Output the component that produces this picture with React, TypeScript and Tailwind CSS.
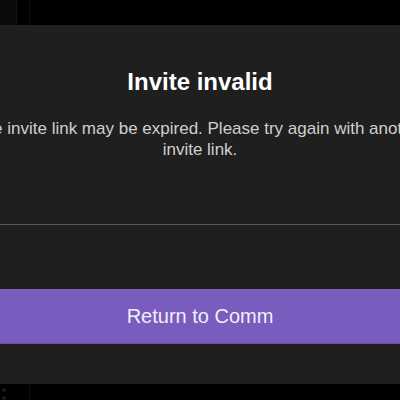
export default function App() {
  return (
    <div className="w-[400px] h-[400px] bg-black overflow-hidden flex flex-col font-['Liberation_Sans',Arial,sans-serif]">
      {/* top strip */}
      <div className="h-[25px] shrink-0 flex">
        <div className="w-[16px] bg-[#0a0a0a]" />
        <div className="w-px bg-[#141414]" />
        <div className="w-[12px]" />
        <div className="w-px bg-[#0c0c0c]" />
        <div className="flex-1" />
      </div>

      {/* modal body */}
      <div className="h-[359px] shrink-0 bg-[#1f1f1f] flex justify-center">
        <div className="w-[470px] shrink-0 flex flex-col">
          <div className="pt-[42px] text-center">
            <h1 className="text-[24px] leading-[30px] font-bold text-white">Invite invalid</h1>
            <p className="mt-[21px] text-[17px] leading-[21px] text-[#cfcfcf]">
              The invite link may be expired. Please try again with another invite link.
            </p>
          </div>
          <div className="mt-[64px] h-px bg-[#585858]" />
          <div className="mt-[64px] h-[55px] bg-[#795cbd] border-b border-[#6a4faa] flex items-center justify-center">
            <span className="text-[20px] text-[#f2eefa]">Return to Comm</span>
          </div>
        </div>
      </div>

      {/* bottom strip */}
      <div className="flex-1 flex">
        <div className="w-[8px] flex flex-col items-center gap-[4px] pt-[4px]">
          <div className="w-[4px] h-[4px] rounded-full bg-[#1a1a1a]" />
          <div className="w-[4px] h-[4px] rounded-full bg-[#1a1a1a]" />
        </div>
        <div className="w-[21px]" />
        <div className="w-px bg-[#111111]" />
      </div>
    </div>
  )
}
